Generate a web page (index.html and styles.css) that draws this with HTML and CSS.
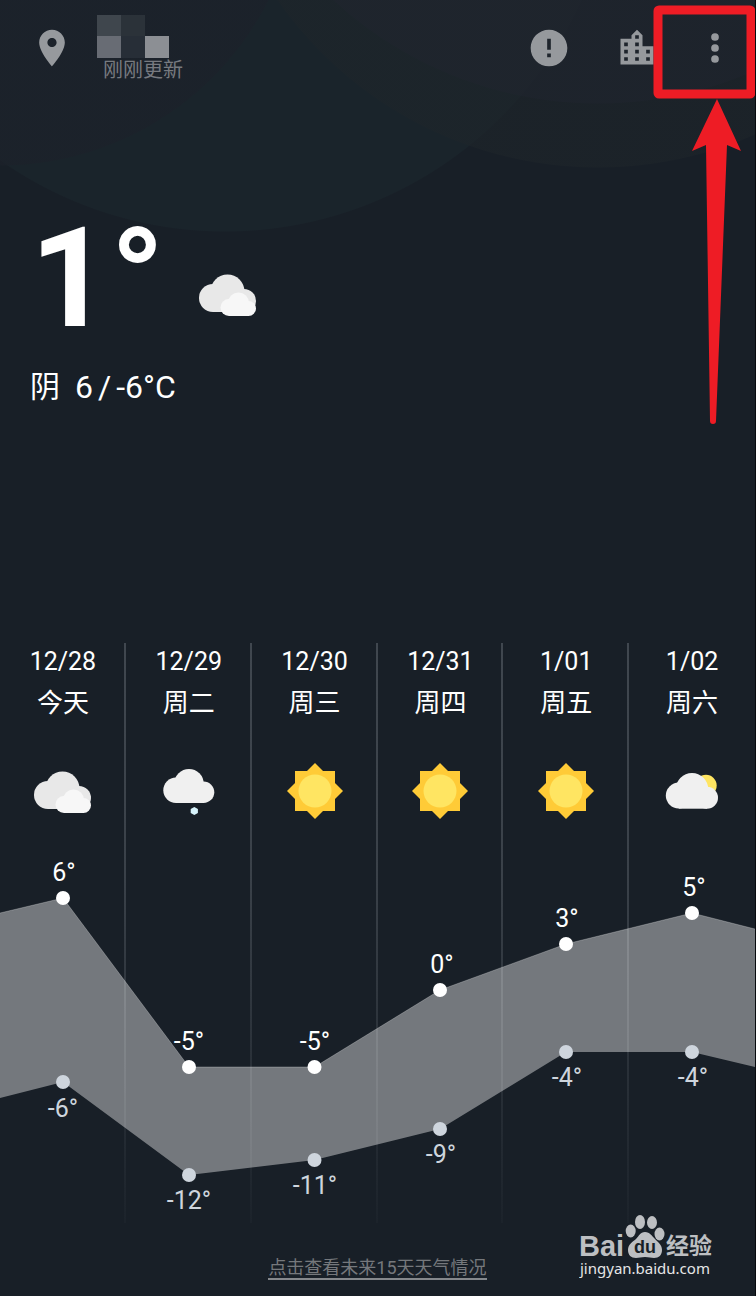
FILE: index.html
```html
<!DOCTYPE html>
<html lang="zh-CN">
<head>
  <meta charset="UTF-8" />
  <meta name="viewport" content="width=device-width, initial-scale=1.0"/>
  <title>天气</title>
  <link rel="stylesheet" href="styles.css">
</head>
<body>
  <svg class="symbols" aria-hidden="true">
    <symbol id="overcast" viewBox="0 0 60 60">
      <g fill="#e8e8e8">
        <circle cx="15" cy="34" r="14"/>
        <circle cx="29.5" cy="27.5" r="17"/>
        <circle cx="46" cy="37" r="12"/>
        <rect x="15" y="34" width="31" height="14"/>
      </g>
      <g fill="#f7f7f7">
        <circle cx="31" cy="43.5" r="8.5"/>
        <circle cx="40.5" cy="39" r="10.5"/>
        <circle cx="50.5" cy="44.5" r="7.5"/>
        <rect x="31" y="42" width="20" height="10"/>
      </g>
    </symbol>
    <symbol id="snow" viewBox="0 0 60 60">
      <g fill="#f0f0f0">
        <circle cx="17" cy="29.3" r="12.7"/>
        <circle cx="30" cy="22.7" r="14.7"/>
        <circle cx="44.6" cy="31.3" r="10.7"/>
        <rect x="17" y="28" width="28" height="14"/>
      </g>
      <path fill="#d7f3fb" d="M35.3 46l3.6 2v4l-3.6 2-3.6-2v-4z"/>
    </symbol>
    <symbol id="sunny" viewBox="0 0 60 60">
      <path fill="#ffcb37" d="M10 10h40v40H10zM30 2l28 28-28 28L2 30z"/>
      <circle cx="30" cy="30" r="16.5" fill="#ffe562"/>
    </symbol>
    <symbol id="cloudy" viewBox="0 0 60 60">
      <circle cx="44" cy="24.5" r="10.7" fill="#ffe562"/>
      <g fill="#f0f0f0">
        <circle cx="16.8" cy="34.6" r="13"/>
        <circle cx="30" cy="28.2" r="16.2"/>
        <circle cx="45" cy="36.7" r="11"/>
        <rect x="16.8" y="34" width="28.2" height="13.7"/>
      </g>
    </symbol>
  </svg>

  <main class="app">
    <header class="topbar">
      <svg class="icon" viewBox="0 0 24 24"><path d="M12 2C8.13 2 5 5.13 5 9c0 5.25 7 13 7 13s7-7.75 7-13c0-3.87-3.13-7-7-7zm0 9.5c-1.38 0-2.5-1.12-2.5-2.5s1.12-2.5 2.5-2.5 2.5 1.12 2.5 2.5-1.12 2.5-2.5 2.5z"/></svg>
      <div class="place">
        <svg class="place-name" width="72" height="43" viewBox="0 0 72 43" shape-rendering="crispEdges">
          <rect width="24" height="21" fill="#3f464d"/>
          <rect x="24" width="24" height="21" fill="#2b3239"/>
          <rect y="21" width="24" height="22" fill="#686c74"/>
          <rect x="24" y="21" width="24" height="22" fill="#272e37"/>
          <rect x="48" y="21" width="24" height="22" fill="#8c8f94"/>
        </svg>
        <span class="updated">刚刚更新</span>
      </div>
      <button type="button" class="tool" aria-label="预警"><svg class="icon" viewBox="0 0 24 24"><path d="M12 2C6.48 2 2 6.48 2 12s4.48 10 10 10 10-4.48 10-10S17.52 2 12 2zm1 15h-2v-2h2v2zm0-4h-2V7h2v6z"/></svg></button>
      <button type="button" class="tool" aria-label="城市"><svg class="icon" viewBox="0 0 24 24"><path d="M15 11V5l-3-3-3 3v2H3v14h18V11h-6zm-8 8H5v-2h2v2zm0-4H5v-2h2v2zm0-4H5V9h2v2zm6 8h-2v-2h2v2zm0-4h-2v-2h2v2zm0-4h-2V9h2v2zm0-4h-2V5h2v2zm6 12h-2v-2h2v2zm0-4h-2v-2h2v2z"/></svg></button>
      <button type="button" class="tool more" aria-label="更多"><svg class="icon" viewBox="0 0 24 24"><circle cx="12" cy="6" r="2.1"/><circle cx="12" cy="12" r="2.1"/><circle cx="12" cy="18" r="2.1"/></svg></button>
    </header>

    <section class="current">
      <div class="now">
        <span class="temp">1°</span>
        <svg class="weather"><use href="#overcast"/></svg>
      </div>
      <div class="range">
        <span class="sky">阴</span>
        <span>6</span>
        <span>/</span>
        <span>-6°C</span>
      </div>
    </section>

    <section class="forecast">
      <div class="days">
        <div class="day"><span class="date">12/28</span><span class="week">今天</span><svg class="weather"><use href="#overcast"/></svg></div>
        <div class="day"><span class="date">12/29</span><span class="week">周二</span><svg class="weather"><use href="#snow"/></svg></div>
        <div class="day"><span class="date">12/30</span><span class="week">周三</span><svg class="weather"><use href="#sunny"/></svg></div>
        <div class="day"><span class="date">12/31</span><span class="week">周四</span><svg class="weather"><use href="#sunny"/></svg></div>
        <div class="day"><span class="date">1/01</span><span class="week">周五</span><svg class="weather"><use href="#sunny"/></svg></div>
        <div class="day"><span class="date">1/02</span><span class="week">周六</span><svg class="weather"><use href="#cloudy"/></svg></div>
      </div>

      <svg class="chart" viewBox="0 0 755 373">
        <path class="band" d="M0 63L63 48 189 217H314.500L440 140 566 94 692 63 755 79V217L692 202H566L440 279 314.500 310 189 325 63 232 0 248z"/>
        <path class="edge" d="M0 63L63 48 189 217H314.500L440 140 566 94 692 63 755 79"/>
        <g class="high">
          <circle cx="63" cy="48" r="7"/><text x="64" y="31">6°</text>
          <circle cx="189" cy="217" r="7"/><text x="189" y="200">-5°</text>
          <circle cx="314.500" cy="217" r="7"/><text x="315" y="200">-5°</text>
          <circle cx="440" cy="140" r="7"/><text x="442" y="123">0°</text>
          <circle cx="566" cy="94" r="7"/><text x="567" y="77">3°</text>
          <circle cx="692" cy="63" r="7"/><text x="694" y="46">5°</text>
        </g>
        <g class="low">
          <circle cx="63" cy="232" r="7"/><text x="63" y="267">-6°</text>
          <circle cx="189" cy="325" r="7"/><text x="189" y="359">-12°</text>
          <circle cx="314.500" cy="310" r="7"/><text x="315" y="344">-11°</text>
          <circle cx="440" cy="279" r="7"/><text x="441" y="313">-9°</text>
          <circle cx="566" cy="202" r="7"/><text x="567" y="236">-4°</text>
          <circle cx="692" cy="202" r="7"/><text x="693" y="236">-4°</text>
        </g>
      </svg>
    </section>

    <footer class="bottom">
      <a class="more-days" href="#">点击查看未来15天天气情况</a>
    </footer>

    <svg class="pointer" width="102" height="430" viewBox="0 0 102 430">
      <rect x="5" y="10" width="93" height="84" rx="1" fill="none" stroke="#ee1c25" stroke-width="9" stroke-linejoin="round"/>
      <path fill="#ee1c25" d="M64 99L88 151 74 145 63 421Q63 424 60 424 57 424 57 421L53 145 39 151z"/>
    </svg>

    <svg class="watermark" width="140" height="70" viewBox="0 0 140 70">
      <g fill="#bdbfc2">
        <text class="wm-bai" x="0" y="43">Bai</text>
        <ellipse cx="51.700" cy="18" rx="5" ry="6.500"/>
        <ellipse cx="61" cy="9" rx="5" ry="7"/>
        <ellipse cx="73" cy="9.500" rx="5" ry="6.500"/>
        <ellipse cx="80.500" cy="21" rx="5" ry="6.500"/>
        <path d="M66 19c5 0 7 4 10 7 4 4 7 6 7 11 0 5-3 8-8 8-3 0-5-1-9-1s-6 1-9 1c-5 0-8-3-8-8 0-5 4-8 8-11 3-3 4-7 9-7z"/>
        <text class="wm-zh" x="87" y="41">经验</text>
      </g>
      <text class="wm-du" x="66" y="40">du</text>
      <text class="wm-url" x="1" y="61">jingyan.baidu.com</text>
    </svg>
  </main>
</body>
</html>
```
FILE: styles.css
```css
* { box-sizing: border-box; }
body { margin: 0; background: #181f27; color: #fff; font-family: Roboto, "Noto Sans CJK SC", sans-serif; }
svg { display: block; flex-shrink: 0; }
.symbols { position: absolute; width: 0; height: 0; }

.app {
  position: relative;
  min-height: 100vh;
  border-right: 1px solid #070a0e;
  background:
    radial-gradient(circle at 598px -287px, rgba(32, 36, 47, 0.5) 390px, transparent 391px),
    radial-gradient(circle at 598px -223px, rgba(30, 37, 42, 0.6) 390px, transparent 391px),
    radial-gradient(circle at 0 -135px, rgba(28, 33, 42, 0.7) 300px, transparent 301px),
    radial-gradient(circle at 225px -159px, #1a242b 390px, transparent 391px),
    #181f27;
}

/* top bar */
.topbar { display: flex; align-items: center; height: 96px; padding: 0 18px 0 30px; }
.icon { width: 44px; height: 44px; fill: #96999d; }
.place { flex: 1; margin-left: 23px; }
.updated { display: block; padding-left: 6px; font-size: 20px; line-height: 24px; color: #777a80; }
.tool { margin: 0 0 0 44px; padding: 0; border: 0; background: none; cursor: pointer; }
.tool.more { margin-left: 34px; }

/* current weather */
.current { min-height: 547px; padding: 112px 30px 0; }
.now { display: flex; align-items: center; gap: 33px; }
.temp { font-size: 140px; font-weight: bold; line-height: 140px; }
.weather { width: 60px; height: 60px; }
.now .weather { margin-top: 32px; }
.range { display: flex; gap: 5px; margin-top: 19px; font-size: 32px; line-height: 40px; }
.sky { margin-right: 10px; font-size: 30px; }

/* six day forecast, the chart lies over the lower part of the columns */
.forecast { display: grid; grid-template-columns: 1fr; grid-template-rows: 207px auto; }
.days { grid-area: 1 / 1 / 3 / 2; display: grid; grid-template-columns: repeat(6, 1fr); }
.day {
  display: flex;
  flex-direction: column;
  align-items: center;
  background: linear-gradient(#40474f, #3a4149 40%, #1c232b) right / 2px 100% no-repeat;
}
.day:last-child { background: none; }
.date { font-size: 25px; line-height: 38px; }
.week { font-size: 26px; line-height: 44px; }
.day .weather { margin-top: 36px; }
.chart { grid-area: 2 / 1; width: 100%; height: auto; }
.chart text { font-size: 25px; text-anchor: middle; }
.band { fill: rgba(255, 255, 255, 0.4); }
.edge { fill: none; stroke: rgba(255, 255, 255, 0.25); }
.high { fill: #fff; }
.low { fill: #ced5dd; }

.bottom { display: flex; justify-content: center; padding: 35px 0 16px; }
.more-days { border-bottom: 2px solid #85888c; color: #75787c; font-size: 18px; line-height: 20px; text-decoration: none; }

/* overlays */
.pointer { position: absolute; top: 0; right: 0; pointer-events: none; }
.watermark { position: absolute; right: 36px; bottom: 13px; }
.wm-bai { font: bold 29px "Liberation Sans", sans-serif; }
.wm-zh { font: bold 23px "Noto Sans CJK SC", sans-serif; }
.wm-du { font: bold 18px "Liberation Sans", sans-serif; fill: #181f27; text-anchor: middle; }
.wm-url { font: 15px "Noto Sans", sans-serif; fill: #e6e6e6; }
```
